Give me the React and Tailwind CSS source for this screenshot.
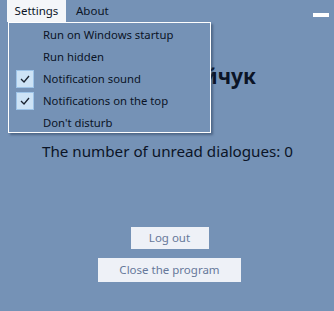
export default function App() {
  const items = [
    { label: "Run on Windows startup", checked: false },
    { label: "Run hidden", checked: false },
    { label: "Notification sound", checked: true },
    { label: "Notifications on the top", checked: true },
    { label: "Don't disturb", checked: false },
  ];

  return (
    <div className="relative w-[334px] h-[311px] bg-[#7592b6] overflow-hidden font-['Noto_Sans',sans-serif] text-[#0b1426]">
      {/* menu bar */}
      <div className="flex items-start h-[22px] pl-[7px] text-[11.5px]">
        <div className="h-[22px] w-[59px] bg-[#f4f6f9] flex items-center justify-center">Settings</div>
        <div className="h-[22px] px-[10px] flex items-center">About</div>
      </div>
      <div className="absolute right-[5px] top-[13px] w-[16px] h-[4px] bg-white" />

      {/* content */}
      <div className="flex flex-col items-center pl-[5px]">
        <div className="mt-[41px] text-[21px] font-bold leading-[26px] pl-[12px]">Олег Стрийчук</div>
        <div className="mt-[51px] text-[15.2px] leading-[22px] mr-[4px]">The number of unread dialogues: 0</div>
        <div className="mt-[65px] w-[78px] h-[22px] bg-[#eef1f7] text-[#66789a] text-[11.5px] flex items-center justify-center">Log out</div>
        <div className="mt-[9px] w-[143px] h-[24px] bg-[#eef1f7] text-[#66789a] text-[11.5px] flex items-center justify-center">Close the program</div>
      </div>

      {/* dropdown */}
      <div className="absolute left-[8px] top-[22px] w-[203px] h-[111px] bg-[#7592b6] border border-white shadow-[2px_2px_2px_rgba(40,60,90,0.5)] py-[1px] text-[11.3px]">
        {items.map((it) => (
          <div key={it.label} className="flex items-center h-[22px]">
            <div className="w-[33px] flex justify-center">
              {it.checked && (
                <div className="w-[18px] h-[18px] ml-[-1px] bg-[#cde3f6] border border-[#9ec4e8] flex items-center justify-center">
                  <svg width="10" height="8" viewBox="0 0 10 8">
                    <path d="M1 4 L4 7 L9 1" fill="none" stroke="#1a2330" strokeWidth="1.3" />
                  </svg>
                </div>
              )}
            </div>
            <span className="pl-[1px]">{it.label}</span>
          </div>
        ))}
      </div>
    </div>
  );
}
